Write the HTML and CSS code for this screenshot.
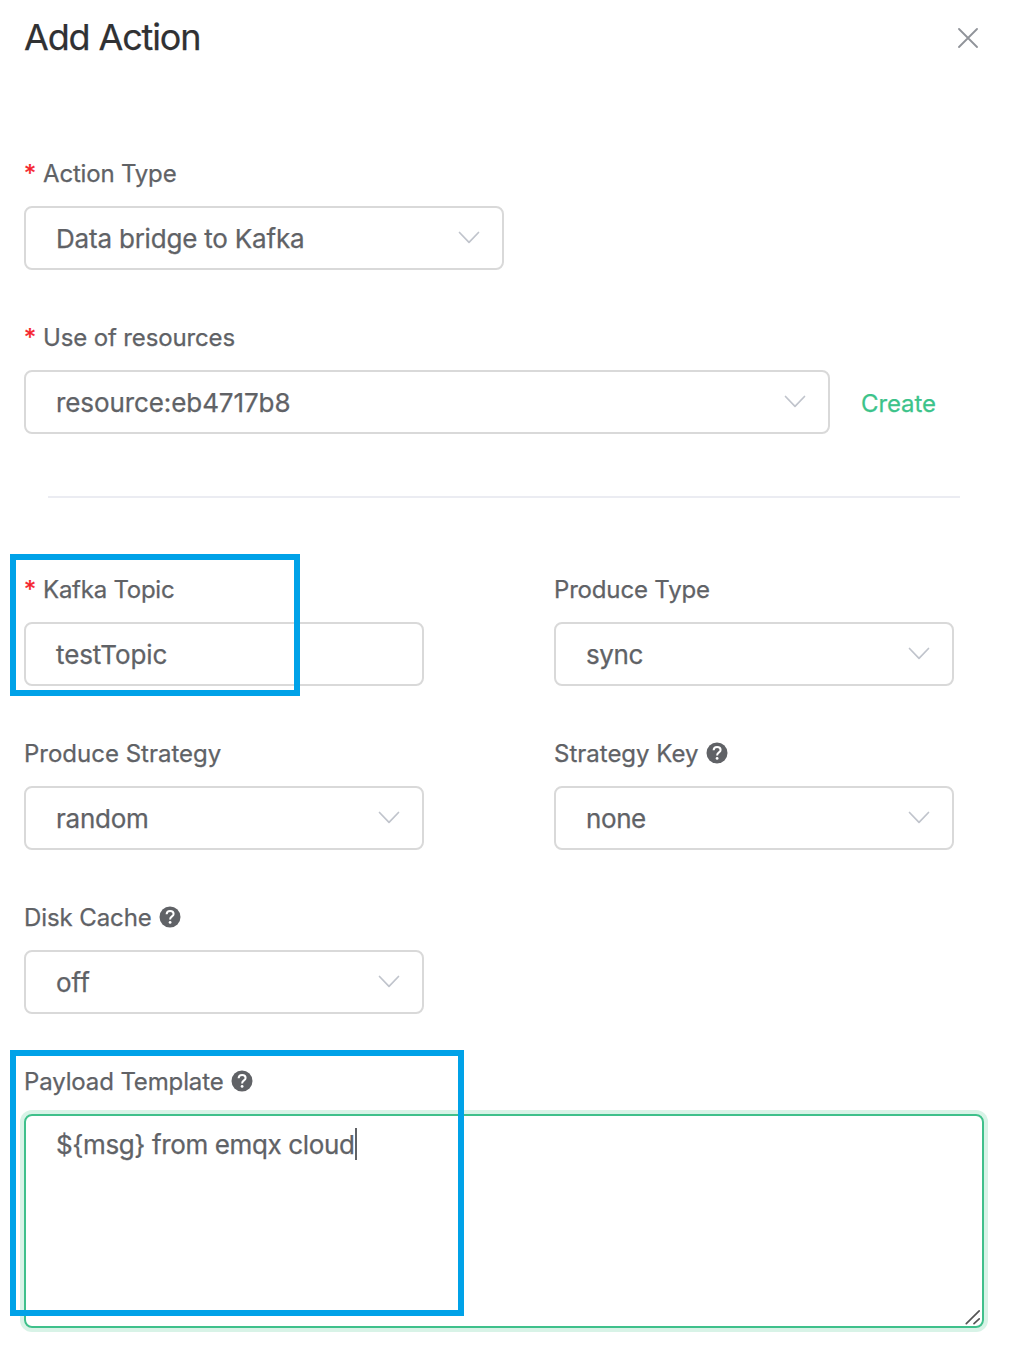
FILE: index.html
```
<!DOCTYPE html>
<html lang="en">
<head>
<meta charset="utf-8">
<title>Add Action</title>
<link rel="stylesheet" href="styles.css">
</head>
<body>
<svg class="defs" aria-hidden="true">
  <symbol id="chevron" viewBox="0 0 22 14"><path d="M1.5 1.5 L11 11.3 L20.5 1.5" fill="none" stroke="currentColor" stroke-width="1.7" stroke-linecap="round" stroke-linejoin="round"/></symbol>
  <symbol id="help" viewBox="0 0 22 22"><circle cx="11" cy="11" r="10.5" fill="currentColor"/><path d="M7.6 8.3 C7.7 6 9.2 5 11.1 5 C13.2 5 14.6 6.2 14.6 8 C14.6 10.5 11.1 10.4 11.1 13.4" fill="none" stroke="#fff" stroke-width="2"/><circle cx="11.1" cy="16.4" r="1.4" fill="#fff"/></symbol>
</svg>
<main class="dialog">
  <header class="dialog-header">
    <h1 class="title">Add Action</h1>
    <svg class="close" viewBox="0 0 20 20"><path d="M1 1 L19 19 M19 1 L1 19" fill="none" stroke="currentColor" stroke-width="1.8" stroke-linecap="round"/></svg>
  </header>
  <form class="form">
    <div class="field">
      <label class="label"><span class="required">*</span><span class="t-action-type">Action Type</span></label>
      <div class="control control-type"><span class="t-bridge">Data bridge to Kafka</span><svg class="chevron"><use href="#chevron"/></svg></div>
    </div>
    <div class="field">
      <label class="label"><span class="required">*</span><span class="t-use">Use of resources</span></label>
      <div class="resource-row">
        <div class="control control-resource"><span class="t-resource">resource:eb4717b8</span><svg class="chevron"><use href="#chevron"/></svg></div>
        <a class="create">Create</a>
      </div>
    </div>
    <hr class="divider">
    <div class="grid">
      <div class="field">
        <label class="label"><span class="required">*</span><span class="t-topic">Kafka Topic</span></label>
        <div class="control"><span class="t-test">testTopic</span></div>
        <div class="highlight highlight-topic"></div>
      </div>
      <div class="field">
        <label class="label"><span class="t-ptype">Produce Type</span></label>
        <div class="control"><span class="t-sync">sync</span><svg class="chevron"><use href="#chevron"/></svg></div>
      </div>
      <div class="field">
        <label class="label"><span>Produce Strategy</span></label>
        <div class="control"><span class="t-random">random</span><svg class="chevron"><use href="#chevron"/></svg></div>
      </div>
      <div class="field">
        <label class="label"><span>Strategy Key</span><svg class="help"><use href="#help"/></svg></label>
        <div class="control"><span class="t-none">none</span><svg class="chevron"><use href="#chevron"/></svg></div>
      </div>
      <div class="field">
        <label class="label"><span class="t-disk">Disk Cache</span><svg class="help"><use href="#help"/></svg></label>
        <div class="control"><span>off</span><svg class="chevron"><use href="#chevron"/></svg></div>
      </div>
    </div>
    <div class="field">
      <label class="label"><span class="t-payload">Payload Template</span><svg class="help"><use href="#help"/></svg></label>
      <div class="textarea"><span class="t-msg">${msg} from emqx cloud</span><span class="caret"></span>
        <svg class="grip" viewBox="0 0 16 16"><path d="M2.3 14.6 L15.2 1.8 M10 14.6 L15.2 9.9" fill="none" stroke="#555" stroke-width="1.7" stroke-linecap="round"/></svg>
      </div>
      <div class="highlight highlight-payload"></div>
    </div>
  </form>
</main>
</body>
</html>
```
FILE: styles.css
```
* { box-sizing: border-box; }
body { margin: 0; background: #fff; color: #606266; font-family: Inter, "Liberation Sans", sans-serif; -webkit-text-stroke: 0.25px currentColor; }
.defs { position: absolute; width: 0; height: 0; }
.dialog { width: 1010px; height: 1364px; padding: 0 24px; overflow: hidden; }
.dialog-header { display: flex; justify-content: space-between; align-items: center; height: 76px; padding-right: 8px; }
.title { margin: 0 0 2px; font-size: 36px; font-weight: 400; line-height: 44px; color: #303133; letter-spacing: -1.15px; }
.close { width: 20px; height: 20px; color: #909399; }
.form { padding-top: 66px; }
.field { position: relative; height: 164px; }
.label { display: flex; align-items: center; height: 64px; padding-bottom: 2px; font-size: 24px; white-space: nowrap; }
.required { width: 19px; color: #f5222d; }
.help { width: 22px; height: 22px; margin-left: 7px; }
.control { display: flex; align-items: center; justify-content: space-between; width: 400px; height: 64px; padding: 0 22px 0 30px; border: 2px solid #d9d9d9; border-radius: 8px; font-size: 26px; white-space: nowrap; }
.control-type { width: 480px; }
.control-resource { width: 806px; }
.chevron { width: 22px; height: 14px; margin-top: -1px; color: #c0c4cc; }
.resource-row { display: flex; align-items: center; gap: 31px; }
.create { padding-top: 3px; font-size: 24px; color: #3cc38a; letter-spacing: -0.1px; }
.divider { width: 912px; height: 2px; margin: 26px 24px 60px; border: 0; background: #ebecf2; }
.grid { display: grid; grid-template-columns: 400px 400px; column-gap: 130px; }
.textarea { position: relative; display: flex; align-items: flex-start; width: 960px; height: 214px; padding: 12px 30px; border: 2px solid #3fc08b; border-radius: 8px; box-shadow: 0 0 0 4px #d8f3e7; font-size: 26px; line-height: 34px; white-space: nowrap; }
.caret { width: 2px; height: 32px; background: #606266; }
.grip { position: absolute; right: 2px; bottom: 1px; width: 16px; height: 16px; }
.highlight { position: absolute; left: -14px; border: 6px solid #00a2e8; }
.highlight-topic { top: -4px; width: 290px; height: 142px; }
.highlight-payload { top: 0; width: 454px; height: 266px; }

/* Tracking per text run */
.t-action-type { letter-spacing: -0.18px; }
.t-bridge { letter-spacing: -0.2px; }
.t-use { letter-spacing: -0.14px; }
.t-resource { letter-spacing: -0.09px; }
.t-topic { letter-spacing: -0.25px; }
.t-test { letter-spacing: -0.1px; }
.t-ptype { letter-spacing: -0.17px; }
.t-sync { letter-spacing: -0.4px; }
.t-random { letter-spacing: -0.25px; }
.t-none { letter-spacing: -0.4px; }
.t-disk { letter-spacing: -0.1px; }
.t-payload { letter-spacing: -0.13px; }
.t-msg { letter-spacing: -0.37px; }
```
